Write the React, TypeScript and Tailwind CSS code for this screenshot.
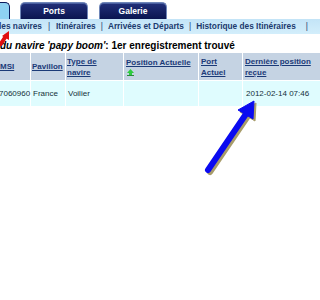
import React from "react";

const F = { fontFamily: '"Liberation Sans", Arial, sans-serif' };

function Tab({ label, left }: { label: string; left: string }) {
  return (
    <div
      className={`${left} w-[68px] h-[17px] rounded-t-[5px] border border-b-0 border-[#6f86b8] bg-gradient-to-b from-[#22307a] to-[#0a1550] flex items-center justify-center shadow-[inset_0_1px_0_#4a5fa0]`}
    >
      <span className="text-white text-[8.5px] font-bold leading-none">{label}</span>
    </div>
  );
}

export default function App() {
  return (
    <div className="relative w-[320px] h-[300px] overflow-hidden bg-white" style={F}>
      {/* tabs */}
      <div className="flex items-end h-[19px] pt-[2px]">
        <div className="w-[10px] h-[17px] rounded-tr-[5px] border-r border-t border-[#0b1a5c] bg-[#8ed2f2]" />
        <Tab label="Ports" left="ml-[10px]" />
        <Tab label="Galerie" left="ml-[11px]" />
      </div>
      {/* nav bar */}
      <div className="h-[15px] bg-gradient-to-b from-[#c3e4f7] to-[#d3eefb] flex items-center text-[8.3px] font-bold text-[#1b3a6e] leading-none whitespace-nowrap">
        <span className="ml-[-1px]">les navires</span>
        <span className="mx-[6px] font-normal">|</span>
        <span>Itinéraires</span>
        <span className="mx-[5px] font-normal">|</span>
        <span>Arrivées et Départs</span>
        <span className="mx-[5px] font-normal">|</span>
        <span>Historique des Itinéraires</span>
        <span className="mx-[10px] font-normal">|</span>
      </div>
      {/* title */}
      <div className="h-[19px] flex items-end pb-[2px] text-[10px] font-bold text-black leading-none whitespace-nowrap">
        <span className="italic">du navire 'papy boom'</span>
        <span>: 1er enregistrement trouvé</span>
      </div>
      {/* table */}
      <div className="text-[8px] leading-[11px]">
        <div className="grid grid-cols-[30px_34px_57px_74px_43px_1fr] gap-x-px h-[27px]">
          <div className="bg-[#c5d3e3] flex items-center">
            <span className="font-bold underline text-[#1b3a78]">MSI</span>
          </div>
          <div className="bg-[#c5d3e3] flex items-center pl-[1px]">
            <span className="font-bold underline text-[#1b3a78]">Pavillon</span>
          </div>
          <div className="bg-[#c5d3e3] flex items-center pl-[1px]">
            <span className="font-bold underline text-[#1b3a78]">
              Type de
              <br />
              navire
            </span>
          </div>
          <div className="bg-[#c5d3e3] flex flex-col justify-center pl-[2px]">
            <span className="font-bold underline text-[#1b3a78]">Position Actuelle</span>
            <svg width="7" height="7" viewBox="0 0 7 7" className="ml-[1px] mt-[1px]">
              <polygon points="3.5,0 7,4 5,4 5,6 2,6 2,4 0,4" fill="#2ecc40" />
              <rect x="0" y="6" width="7" height="1" fill="#2a8a3a" />
            </svg>
          </div>
          <div className="bg-[#c5d3e3] flex items-center pl-[2px]">
            <span className="font-bold underline text-[#1b3a78]">
              Port
              <br />
              Actuel
            </span>
          </div>
          <div className="bg-[#c5d3e3] flex items-center pl-[2px]">
            <span className="font-bold underline text-[#1b3a78]">
              Dernière position
              <br />
              reçue
            </span>
          </div>
        </div>
        <div className="grid grid-cols-[30px_34px_57px_74px_43px_1fr] gap-x-px h-[25px] mt-px text-[#14303a]">
          <div className="bg-[#dffcfe] flex items-center ml-[-1px]">7060960</div>
          <div className="bg-[#dffcfe] flex items-center pl-[2px]">France</div>
          <div className="bg-[#dffcfe] flex items-center pl-[2px]">Voilier</div>
          <div className="bg-[#dffcfe]" />
          <div className="bg-[#dffcfe]" />
          <div className="bg-[#dffcfe] flex items-center pl-[3px]">2012-02-14 07:46</div>
        </div>
      </div>
      {/* red arrow */}
      <svg className="absolute left-0 top-[30px]" width="14" height="16" viewBox="0 0 14 16">
        <line x1="0" y1="15" x2="6" y2="6" stroke="#e01010" strokeWidth="4" strokeLinecap="round" />
        <polygon points="9,1 9,10 2,6" fill="#e01010" />
      </svg>
      {/* blue arrow */}
      <svg className="absolute left-[200px] top-[96px]" width="64" height="82" viewBox="0 0 64 82">
        <g transform="translate(2,2)" fill="#a89c6a" stroke="#a89c6a">
          <line x1="8" y1="74" x2="46" y2="18" strokeWidth="6" strokeLinecap="round" />
          <polygon points="54,5 53,23 38,14" />
        </g>
        <g fill="#0a0af0" stroke="#0a0af0">
          <line x1="8" y1="74" x2="46" y2="18" strokeWidth="6" strokeLinecap="round" />
          <polygon points="54,5 53,23 38,14" strokeWidth="1" strokeLinejoin="round" />
        </g>
      </svg>
    </div>
  );
}
